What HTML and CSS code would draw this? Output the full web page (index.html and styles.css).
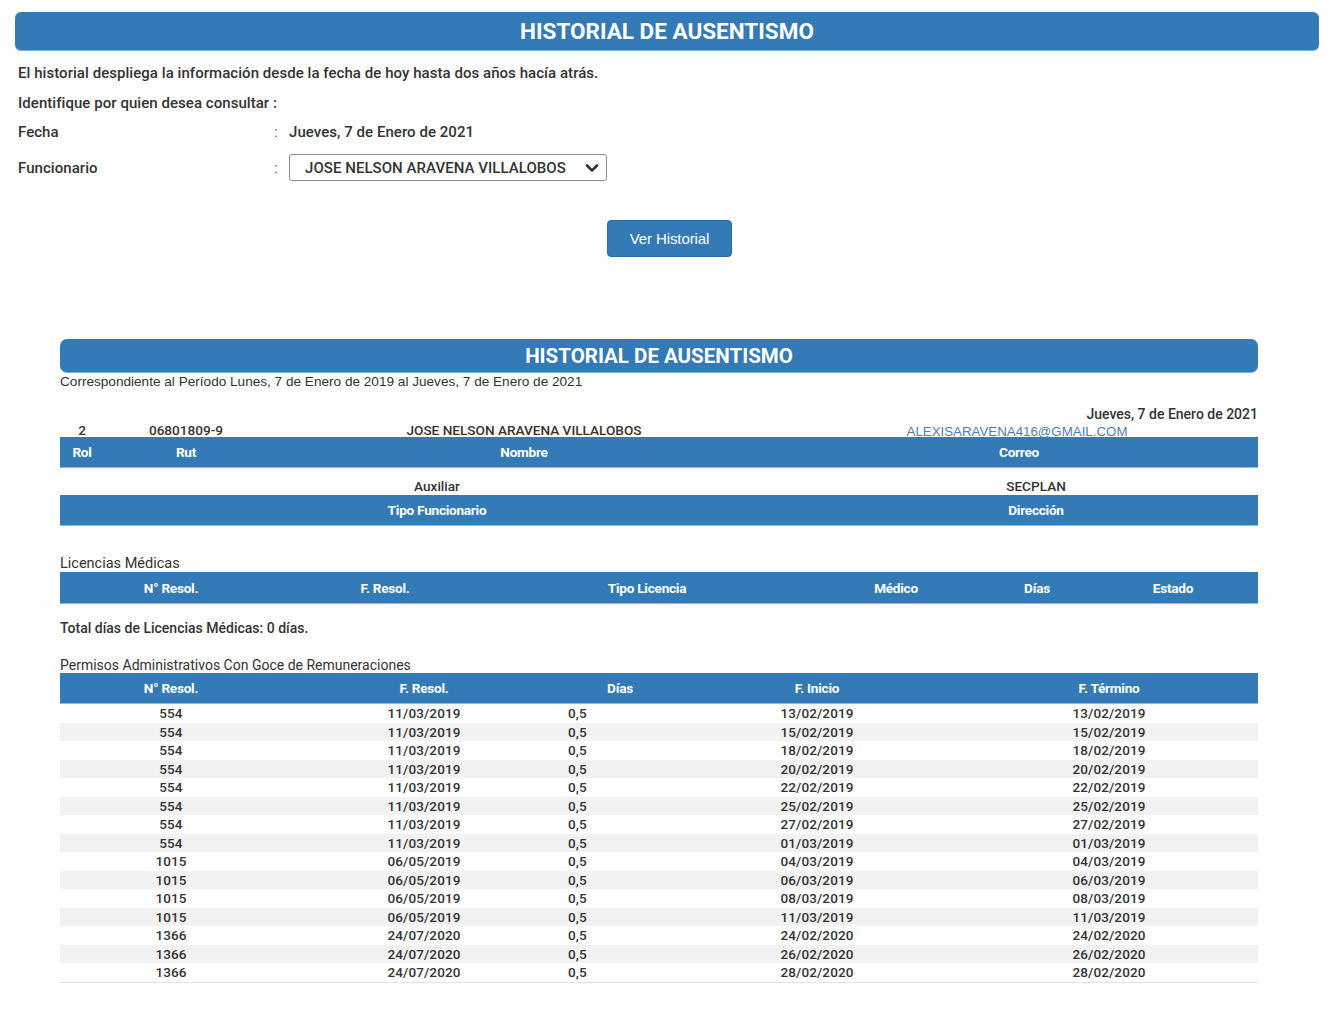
FILE: index.html
```html
<!DOCTYPE html>
<html lang="es">
<head>
<meta charset="utf-8">
<title>Historial de Ausentismo</title>
<link rel="stylesheet" href="styles.css">
</head>
<body>
<div class="top">
  <div class="banner banner-top">HISTORIAL DE AUSENTISMO</div>
  <p class="line line-1">El historial despliega la información desde la fecha de hoy hasta dos años hacía atrás.</p>
  <p class="line line-2">Identifique por quien desea consultar :</p>
  <div class="field field-fecha">
    <span class="field-label">Fecha</span>
    <span class="colon">:</span>
    <span class="field-value">Jueves, 7 de Enero de 2021</span>
  </div>
  <div class="field field-func">
    <span class="field-label">Funcionario</span>
    <span class="colon">:</span>
    <div class="select">
      <span>JOSE NELSON ARAVENA VILLALOBOS</span>
      <svg class="chev" width="14" height="10" viewBox="0 0 14 10"><path d="M2 2.5 L7 7.5 L12 2.5" fill="none" stroke="#333" stroke-width="2.6" stroke-linecap="round" stroke-linejoin="round"/></svg>
    </div>
  </div>
  <div class="btn-row"><button class="btn">Ver Historial</button></div>
</div>

<div class="report">
  <div class="banner banner-report">HISTORIAL DE AUSENTISMO</div>
  <p class="period">Correspondiente al Período Lunes, 7 de Enero de 2019 al Jueves, 7 de Enero de 2021</p>
  <div class="report-date">Jueves, 7 de Enero de 2021</div>

  <div class="grid g-info data-row">
    <div>2</div><div>06801809-9</div><div>JOSE NELSON ARAVENA VILLALOBOS</div><div class="email">ALEXISARAVENA416@GMAIL.COM</div>
  </div>
  <div class="grid g-info head-row">
    <div>Rol</div><div>Rut</div><div>Nombre</div><div>Correo</div>
  </div>
  <div class="grid g-info2 data-row data-row-2">
    <div>Auxiliar</div><div>SECPLAN</div>
  </div>
  <div class="grid g-info2 head-row">
    <div>Tipo Funcionario</div><div>Dirección</div>
  </div>

  <p class="section-label lic-label">Licencias Médicas</p>
  <div class="grid g-lic head-row head-lic">
    <div>N° Resol.</div><div>F. Resol.</div><div>Tipo Licencia</div><div>Médico</div><div>Días</div><div>Estado</div>
  </div>
  <p class="total">Total días de Licencias Médicas: 0 días.</p>

  <p class="section-label perm-label">Permisos Administrativos Con Goce de Remuneraciones</p>
  <div class="grid g-perm head-row">
    <div>N° Resol.</div><div>F. Resol.</div><div>Días</div><div>F. Inicio</div><div>F. Término</div>
  </div>
  <div class="perm-body">
    <div class="grid g-perm prow"><div>554</div><div>11/03/2019</div><div class="dias">0,5</div><div>13/02/2019</div><div>13/02/2019</div></div>
    <div class="grid g-perm prow"><div>554</div><div>11/03/2019</div><div class="dias">0,5</div><div>15/02/2019</div><div>15/02/2019</div></div>
    <div class="grid g-perm prow"><div>554</div><div>11/03/2019</div><div class="dias">0,5</div><div>18/02/2019</div><div>18/02/2019</div></div>
    <div class="grid g-perm prow"><div>554</div><div>11/03/2019</div><div class="dias">0,5</div><div>20/02/2019</div><div>20/02/2019</div></div>
    <div class="grid g-perm prow"><div>554</div><div>11/03/2019</div><div class="dias">0,5</div><div>22/02/2019</div><div>22/02/2019</div></div>
    <div class="grid g-perm prow"><div>554</div><div>11/03/2019</div><div class="dias">0,5</div><div>25/02/2019</div><div>25/02/2019</div></div>
    <div class="grid g-perm prow"><div>554</div><div>11/03/2019</div><div class="dias">0,5</div><div>27/02/2019</div><div>27/02/2019</div></div>
    <div class="grid g-perm prow"><div>554</div><div>11/03/2019</div><div class="dias">0,5</div><div>01/03/2019</div><div>01/03/2019</div></div>
    <div class="grid g-perm prow"><div>1015</div><div>06/05/2019</div><div class="dias">0,5</div><div>04/03/2019</div><div>04/03/2019</div></div>
    <div class="grid g-perm prow"><div>1015</div><div>06/05/2019</div><div class="dias">0,5</div><div>06/03/2019</div><div>06/03/2019</div></div>
    <div class="grid g-perm prow"><div>1015</div><div>06/05/2019</div><div class="dias">0,5</div><div>08/03/2019</div><div>08/03/2019</div></div>
    <div class="grid g-perm prow"><div>1015</div><div>06/05/2019</div><div class="dias">0,5</div><div>11/03/2019</div><div>11/03/2019</div></div>
    <div class="grid g-perm prow"><div>1366</div><div>24/07/2020</div><div class="dias">0,5</div><div>24/02/2020</div><div>24/02/2020</div></div>
    <div class="grid g-perm prow"><div>1366</div><div>24/07/2020</div><div class="dias">0,5</div><div>26/02/2020</div><div>26/02/2020</div></div>
    <div class="grid g-perm prow"><div>1366</div><div>24/07/2020</div><div class="dias">0,5</div><div>28/02/2020</div><div>28/02/2020</div></div>
  </div>
</div>
</body>
</html>
```
FILE: styles.css
```css
* { box-sizing: border-box; }
html, body { background: #fff; }
body {
  margin: 0;
  font-family: Roboto, "Liberation Sans", Arial, sans-serif;
  color: #333;
}
p { margin: 0; }

.banner {
  background: #337ab7;
  color: #fff;
  font-weight: 700;
  text-align: center;
  border-radius: 6px;
  border-bottom: 1px solid #6fb3e0;
}

.top { padding: 12px 21px 0 15px; }
.banner-top {
  height: 39px;
  line-height: 39px;
  font-size: 22.5px;
}

.line {
  font-size: 15px;
  font-weight: 500;
  letter-spacing: 0.05px;
  line-height: 18px;
  padding-left: 3px;
}
.line-1 { margin-top: 13px; }
.line-2 { margin-top: 12px; }

.field {
  display: flex;
  align-items: center;
  font-size: 15px;
  font-weight: 500;
  letter-spacing: 0.05px;
  padding-left: 3px;
}
.field-fecha { margin-top: 11px; height: 18px; }
.field-func { margin-top: 13px; height: 27px; }
.field-label { width: 256px; }
.colon { width: 15px; color: #666; font-weight: 400; }
.select {
  width: 318px;
  height: 27px;
  border: 1px solid #8c8c8c;
  border-radius: 3px;
  display: flex;
  align-items: center;
  justify-content: space-between;
  padding: 0 7px 0 15px;
  font-size: 15px;
  font-weight: 500;
}
.chev { display: block; }

.btn-row {
  display: flex;
  justify-content: center;
  margin-top: 39px;
  padding-left: 5px;
}
.btn {
  width: 125px;
  height: 37px;
  background: #337ab7;
  border: 1px solid #2e6da4;
  border-radius: 4px;
  color: #fff;
  font-family: "Liberation Sans", Arial, sans-serif;
  font-size: 15px;
  letter-spacing: -0.1px;
  padding: 0;
}

.report {
  margin: 82px 0 0 60px;
  width: 1198px;
}
.banner-report {
  height: 34px;
  line-height: 34px;
  font-size: 20.5px;
  border-radius: 7px;
}
.period {
  font-family: "Liberation Sans", Arial, sans-serif;
  font-size: 13.6px;
  line-height: 16px;
  margin-top: 1px;
  color: #333;
}
.report-date {
  text-align: right;
  font-size: 14px;
  font-weight: 500;
  line-height: 16px;
  margin-top: 16px;
}

.grid { display: grid; text-align: center; }
.g-info { grid-template-columns: 44px 164px 512px 478px; }
.g-info2 { grid-template-columns: 754px 444px; }
.g-lic { grid-template-columns: 222px 206px 318px 180px 102px 170px; }
.g-perm { grid-template-columns: 222px 284px 108px 286px 298px; }

.data-row {
  font-size: 13.6px;
  font-weight: 500;
  line-height: 16px;
  height: 15px;
  align-items: end;
}
.data-row-2 { height: 27px; line-height: 16px; padding-bottom: 1px; }
.email {
  font-family: "Liberation Sans", Arial, sans-serif;
  font-weight: 400;
  font-size: 13.3px;
  color: #4a7fb0;
  padding-right: 4px;
  line-height: 12px;
}

.head-row {
  background: #337ab7;
  color: #fff;
  font-weight: 700;
  font-size: 13.6px;
  letter-spacing: -0.25px;
  height: 31px;
  align-items: center;
  border-bottom: 1px solid #7cc0e8;
}
.head-lic { height: 32px; }

.section-label {
  font-size: 14px;
  line-height: 16px;
}
.lic-label { margin-top: 30px; font-size: 14.5px; }
.total {
  font-size: 14px;
  font-weight: 500;
  line-height: 16px;
  margin-top: 16px;
}
.perm-label { margin-top: 21px; }

.perm-body { border-bottom: 1px solid #e3e3e3; }
.prow {
  height: 18.5px;
  line-height: 18.5px;
  font-size: 13.5px;
  font-weight: 500;
  letter-spacing: 0.1px;
}
.prow:nth-child(even) { background: #f2f2f2; }
.prow .dias { text-align: left; padding-left: 2px; }
```
